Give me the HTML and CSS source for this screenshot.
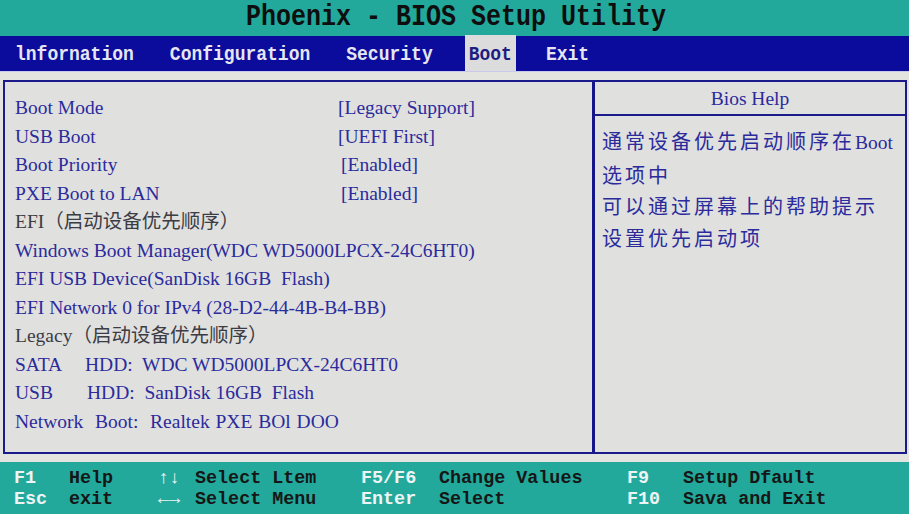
FILE: index.html
```html
<!DOCTYPE html>
<html>
<head>
<meta charset="utf-8">
<link rel="stylesheet" href="styles.css">
</head>
<body>
<div class="screen">
  <header class="title"><span class="tall">Phoenix - BIOS Setup Utility</span></header>
  <nav class="menu">
    <span class="tab"><span class="tall">lnfornation</span></span>
    <span class="tab"><span class="tall">Configuration</span></span>
    <span class="tab"><span class="tall">Security</span></span>
    <span class="tab active"><span class="tall">Boot</span></span>
    <span class="tab"><span class="tall">Exit</span></span>
  </nav>
  <main class="main">
    <section class="panel">
      <div class="list">
        <div class="row"><span class="label">Boot Mode</span><span class="val">[Legacy Support]</span></div>
        <div class="row"><span class="label">USB Boot</span><span class="val">[UEFI First]</span></div>
        <div class="row"><span class="label">Boot Priority</span><span class="val v2">[Enabled]</span></div>
        <div class="row"><span class="label">PXE Boot to LAN</span><span class="val v2">[Enabled]</span></div>
        <div class="line gray">EFI（启动设备优先顺序）</div>
        <div class="line">Windows Boot Manager(WDC WD5000LPCX-24C6HT0)</div>
        <div class="line">EFI USB Device(SanDisk 16GB&nbsp; Flash)</div>
        <div class="line">EFI Network 0 for IPv4 (28-D2-44-4B-B4-BB)</div>
        <div class="line gray">Legacy（启动设备优先顺序）</div>
        <div class="line"><span class="c1">SATA</span><span class="c2">HDD:</span>&nbsp; WDC WD5000LPCX-24C6HT0</div>
        <div class="line"><span class="c1">USB</span><span class="c2 c2b">HDD:</span>&nbsp; SanDisk 16GB&nbsp; Flash</div>
        <div class="line wide">Network&nbsp; Boot:&nbsp; Realtek PXE BOl DOO</div>
      </div>
      <aside class="help">
        <div class="help-head">Bios Help</div>
        <div class="help-body">
          <div>通常设备优先启动顺序在<span class="latin">Boot</span></div>
          <div>选项中</div>
          <div>可以通过屏幕上的帮助提示</div>
          <div>设置优先启动项</div>
        </div>
      </aside>
    </section>
  </main>
  <footer class="keys">
    <span class="k">F1</span><span class="d">Help</span>
    <span class="k">↑↓</span><span class="d">Select Ltem</span>
    <span class="k">F5/F6</span><span class="d">Change Values</span>
    <span class="k">F9</span><span class="d">Setup Dfault</span>
    <span class="k">Esc</span><span class="d">exit</span>
    <span class="k">←→</span><span class="d">Select Menu</span>
    <span class="k">Enter</span><span class="d">Select</span>
    <span class="k">F10</span><span class="d">Sava and Exit</span>
  </footer>
</div>
</body>
</html>
```
FILE: styles.css
```css
* { box-sizing: border-box; }
html, body { margin: 0; padding: 0; }
body { width: 909px; height: 514px; overflow: hidden; background: #e3e3e0; }
.screen { width: 909px; height: 514px; display: flex; flex-direction: column; }

.title {
  height: 36px;
  flex: none;
  background: #22a99c;
  color: #0e0e0e;
  font-family: "Liberation Mono", "DejaVu Sans Mono", monospace;
  font-weight: bold;
  font-size: 25px;
  line-height: 36px;
  text-align: center;
  padding-left: 3px;
}
.tall { display: inline-block; transform: scaleY(1.2); }

.menu {
  height: 35px;
  flex: none;
  background: #0c0c9c;
  display: flex;
  align-items: stretch;
  gap: 28px;
  padding-left: 11px;
  font-family: "Liberation Mono", "DejaVu Sans Mono", monospace;
  font-weight: bold;
  font-size: 18px;
  color: #e6e6f2;
}
.tab { padding: 0 4px; line-height: 37px; }
.tab:last-child { margin-left: -2px; }
.tab .tall { transform: scaleY(1.15); }
.tab.active { background: #dcdcdc; color: #1c1c82; margin-top: -1px; line-height: 38px; }

.main {
  height: 391px;
  flex: none;
  padding: 8px 2px 0 3px;
  border-top: 1px solid #c9c9ee;
}
.panel {
  height: 374px;
  border: 2px solid #1a1a8c;
  background: #e0e0df;
  display: grid;
  grid-template-columns: 590px 1fr;
}
.list {
  padding: 12px 0 0 10px;
  font-family: "Liberation Serif", "Noto Sans CJK SC", serif;
  font-size: 19.5px;
  line-height: 28.55px;
  color: #2b2b9c;
  border-right: 3px solid #15158a;
}
.row { display: grid; grid-template-columns: 323px 1fr; }
.v2 { padding-left: 3px; }
.line { white-space: nowrap; }
.wide { word-spacing: 1px; }
.gray { color: #3c3c44; }
.c1 { display: inline-block; width: 70px; }
.c2b { margin-left: 2px; }

.help {
  font-family: "Liberation Serif", "Noto Sans CJK SC", serif;
  color: #2b2b9c;
}
.help-head {
  height: 34px;
  border-bottom: 2px solid #1a1a8c;
  text-align: center;
  font-size: 19.5px;
  line-height: 34px;
}
.help-body {
  padding: 9px 0 0 7px;
  font-family: "Noto Sans CJK SC", sans-serif;
  font-size: 20px;
  letter-spacing: 3px;
  line-height: 31.5px;
}
.latin { font-family: "Liberation Serif", serif; font-size: 19.5px; letter-spacing: 0; }

.keys {
  flex: 1;
  background: #22a99c;
  display: grid;
  grid-template-columns: 55px 89px 37px 166px 78px 188px 56px 1fr;
  grid-auto-rows: 21px;
  padding: 6px 0 0 14px;
  font-family: "Liberation Mono", "DejaVu Sans Mono", monospace;
  font-weight: bold;
  font-size: 18.4px;
  line-height: 21px;
  white-space: nowrap;
}
.k { color: #eef4f4; }
.d { color: #161616; }
```
